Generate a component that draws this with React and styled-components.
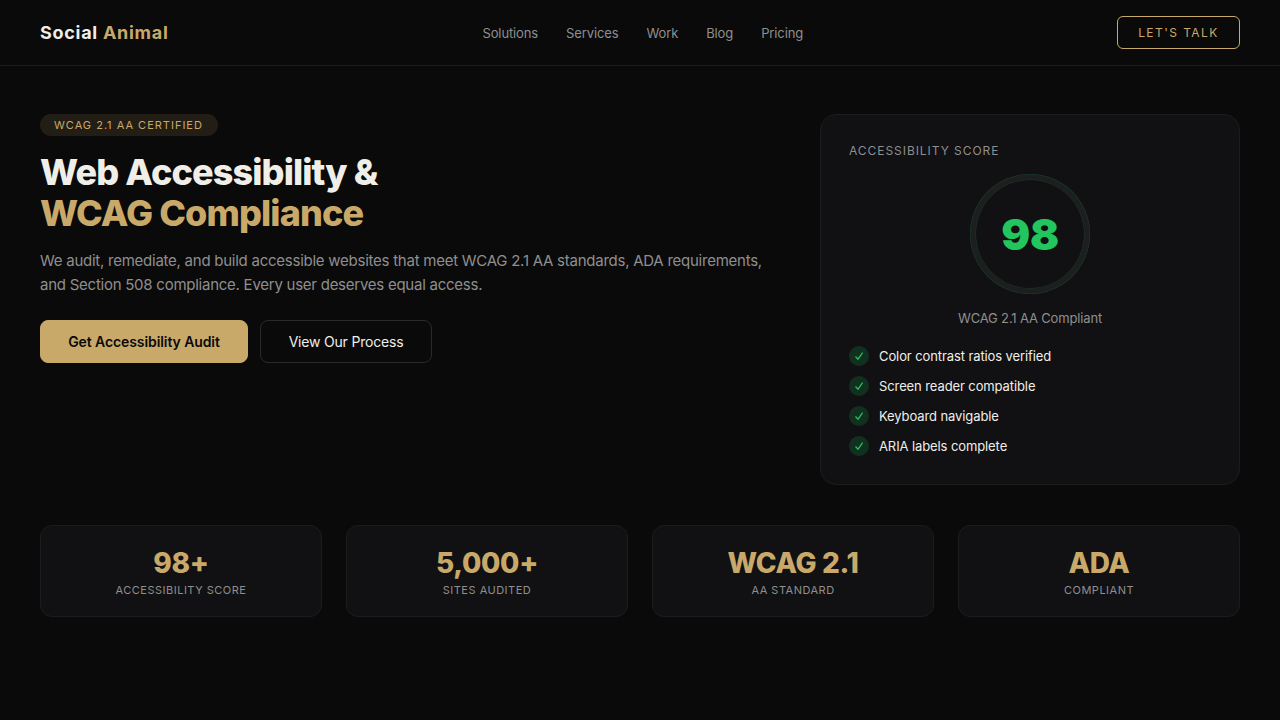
import styled, { createGlobalStyle } from "styled-components";

const GlobalStyle = createGlobalStyle`
  * { box-sizing: border-box; }
  html, body { margin: 0; background: #0a0a0a; }
  body { font-family: "Inter", "Liberation Sans", sans-serif; color: #f0eee9; -webkit-font-smoothing: antialiased; }
`;

const Page = styled.div`
  min-height: 720px;
  background: #0a0a0a;
`;

const Nav = styled.nav`
  height: 66px;
  padding: 0 40px;
  display: flex;
  justify-content: space-between;
  align-items: center;
  border-bottom: 1px solid #1c1c1c;
`;

const Logo = styled.div`
  font-size: 18px;
  font-weight: 700;
  letter-spacing: 0.72px;
  color: #f0eee9;
  span { color: #c8a96a; }
`;

const NavLinks = styled.div`
  display: flex;
  gap: 28px;
  a {
    font-size: 13px;
    letter-spacing: -0.12px;
    color: #8f8f8f;
    text-decoration: none;
  }
`;

const TalkButton = styled.button`
  width: 123px;
  height: 33px;
  padding: 0;
  border: 1px solid #c8a96a;
  border-radius: 6px;
  background: transparent;
  color: #c8a96a;
  font-family: inherit;
  font-size: 12px;
  font-weight: 400;
  letter-spacing: 1.44px;
`;

const Main = styled.main`
  padding: 48px 40px;
`;

const Hero = styled.section`
  display: grid;
  grid-template-columns: 1fr 420px;
  gap: 40px;
  align-items: start;
`;

const Badge = styled.div`
  display: block;
  width: 178px;
  height: 22px;
  padding-left: 14px;
  border-radius: 100px;
  background: #221e16;
  color: #c8a96a;
  font-size: 11px;
  line-height: 22px;
  letter-spacing: 1px;
`;

const Title = styled.h1`
  margin: 16px 0 14px;
  font-size: 36px;
  font-weight: 800;
  line-height: 41.4px;
  letter-spacing: -0.88px;
  color: #f0eee9;
  span { display: block; color: #c8a96a; }
`;

const Lead = styled.p`
  margin: 0 0 23px;
  font-size: 15px;
  line-height: 24px;
  letter-spacing: -0.25px;
  color: #8f8f8f;
`;

const Actions = styled.div`
  display: flex;
  gap: 12px;
`;

const ActionButton = styled.button`
  height: 43px;
  width: ${(p) => (p.$primary ? "208px" : "172px")};
  padding: 0;
  border-radius: 8px;
  border: 1px solid ${(p) => (p.$primary ? "#c8a96a" : "#2a2a2a")};
  background: ${(p) => (p.$primary ? "#c8a96a" : "transparent")};
  color: ${(p) => (p.$primary ? "#0a0a0a" : "#f0eee9")};
  font-family: inherit;
  font-size: 14px;
  font-weight: ${(p) => (p.$primary ? 600 : 400)};
  letter-spacing: ${(p) => (p.$primary ? "-0.09px" : "-0.2px")};
`;

const ScoreCard = styled.aside`
  height: 371px;
  padding: 28px;
  border: 1px solid #1c1c1e;
  border-radius: 16px;
  background: #111113;
`;

const ScoreLabel = styled.div`
  font-size: 12px;
  line-height: 16px;
  letter-spacing: 0.95px;
  color: #8f8f8f;
`;

const Ring = styled.div`
  width: 120px;
  height: 120px;
  margin: 15px auto 16px;
  border-radius: 50%;
  box-shadow:
    inset 0 0 0 0.5px #1b3a2a,
    inset 0 0 0 5.5px #1c1f1e,
    inset 0 0 0 6px #1b3a2a;
  display: flex;
  align-items: center;
  justify-content: center;
  font-size: 43px;
  font-weight: 900;
  letter-spacing: -0.4px;
  color: #22c55e;
`;

const ScoreCaption = styled.div`
  font-size: 13px;
  line-height: 16px;
  letter-spacing: -0.16px;
  text-align: center;
  color: #8f8f8f;
`;

const CheckList = styled.ul`
  margin: 20px 0 0;
  padding: 0;
  list-style: none;
  display: flex;
  flex-direction: column;
  gap: 10px;
`;

const CheckItem = styled.li`
  display: flex;
  align-items: center;
  gap: 10px;
  height: 20px;
  font-size: 13px;
  letter-spacing: -0.1px;
  color: #f0eee9;
`;

const CheckIcon = styled.span`
  width: 20px;
  height: 20px;
  border-radius: 50%;
  background: #12301f;
  display: flex;
  align-items: center;
  justify-content: center;
`;

const Stats = styled.section`
  margin-top: 40px;
  display: grid;
  grid-template-columns: repeat(4, 1fr);
  gap: 24px;
`;

const StatCard = styled.div`
  height: 92px;
  padding-top: 20px;
  border: 1px solid #1c1c1e;
  border-radius: 12px;
  background: #111113;
  text-align: center;
`;

const StatValue = styled.div`
  font-size: 28px;
  font-weight: 800;
  line-height: 34px;
  letter-spacing: -0.3px;
  color: #c8a96a;
`;

const StatLabel = styled.div`
  margin-top: 3px;
  font-size: 11px;
  line-height: 14px;
  letter-spacing: 0.5px;
  color: #8f8f8f;
`;

const links = ["Solutions", "Services", "Work", "Blog", "Pricing"];
const checks = [
  "Color contrast ratios verified",
  "Screen reader compatible",
  "Keyboard navigable",
  "ARIA labels complete",
];
const stats = [
  { value: "98+", label: "Accessibility Score" },
  { value: "5,000+", label: "Sites Audited" },
  { value: "WCAG 2.1", label: "AA Standard" },
  { value: "ADA", label: "Compliant" },
];

export default function App() {
  return (
    <Page>
      <GlobalStyle />
      <Nav>
        <Logo>
          Social <span>Animal</span>
        </Logo>
        <NavLinks>
          {links.map((link) => (
            <a href="#" key={link}>{link}</a>
          ))}
        </NavLinks>
        <TalkButton>LET'S TALK</TalkButton>
      </Nav>
      <Main>
        <Hero>
          <div>
            <Badge>WCAG 2.1 AA CERTIFIED</Badge>
            <Title>
              Web Accessibility &amp;
              <span>WCAG Compliance</span>
            </Title>
            <Lead>
              We audit, remediate, and build accessible websites that meet WCAG 2.1 AA standards, ADA requirements, and Section 508 compliance. Every user deserves equal access.
            </Lead>
            <Actions>
              <ActionButton $primary>Get Accessibility Audit</ActionButton>
              <ActionButton>View Our Process</ActionButton>
            </Actions>
          </div>
          <ScoreCard>
            <ScoreLabel>ACCESSIBILITY SCORE</ScoreLabel>
            <Ring>98</Ring>
            <ScoreCaption>WCAG 2.1 AA Compliant</ScoreCaption>
            <CheckList>
              {checks.map((check) => (
                <CheckItem key={check}>
                  <CheckIcon>
                    <svg width="10" height="10" viewBox="0 0 10 10" fill="none" stroke="#22c55e" strokeWidth="1.2">
                      <path d="M1.5 5.5 L4 8.2 L8.6 1.6" />
                    </svg>
                  </CheckIcon>
                  {check}
                </CheckItem>
              ))}
            </CheckList>
          </ScoreCard>
        </Hero>
        <Stats>
          {stats.map((stat) => (
            <StatCard key={stat.value}>
              <StatValue>{stat.value}</StatValue>
              <StatLabel>{stat.label.toUpperCase()}</StatLabel>
            </StatCard>
          ))}
        </Stats>
      </Main>
    </Page>
  );
}
